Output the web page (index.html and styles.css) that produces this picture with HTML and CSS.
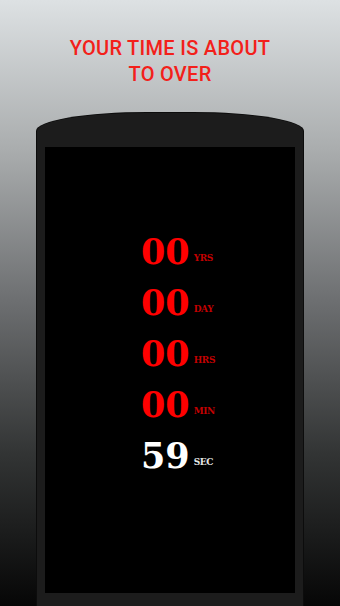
FILE: index.html
```html
<!DOCTYPE html>
<html lang="en">
<head>
    <meta charset="UTF-8">
    <meta name="viewport" content="width=device-width, initial-scale=1.0">
    <title>Countdown</title>
    <link rel="stylesheet" href="styles.css">
</head>
<body>
    <!-- Title -->
    <h1 class="title">YOUR TIME IS ABOUT<br>TO OVER</h1>

    <!-- Phone -->
    <div class="phone">
        <div class="screen">
            <div class="timer">
                <div class="row"><span class="num">00</span><span class="unit">YRS</span></div>
                <div class="row"><span class="num">00</span><span class="unit">DAY</span></div>
                <div class="row"><span class="num">00</span><span class="unit">HRS</span></div>
                <div class="row"><span class="num">00</span><span class="unit">MIN</span></div>
                <div class="row sec"><span class="num">59</span><span class="unit">SEC</span></div>
            </div>
        </div>
    </div>
</body>
</html>
```

FILE: styles.css
```css
html, body {
    margin: 0;
    padding: 0;
    height: 606px;
    overflow: hidden;
}
body {
    background: linear-gradient(#dde1e3, #a9acad 25%, #6c6e70 50%, #323434 75%, #060606);
    font-family: Roboto, Arial, sans-serif;
}
.title {
    margin: 35px 0 0;
    color: #f3201a;
    font-size: 20px;
    font-weight: 500;
    line-height: 26px;
    letter-spacing: 0.3px;
    text-align: center;
}
.phone {
    width: 250px;
    margin: 26px auto 0;
    padding: 34px 8px 20px;
    background: #1c1c1c;
    border-radius: 110px 110px 0 0 / 18px 18px 0 0;
    box-shadow: 0 0 0 1px #0c0c0c;
}
.screen {
    height: 446px;
    background: #000;
}
.timer {
    padding: 79px 0 0 96px;
}
.row {
    height: 51px;
    line-height: 51px;
    white-space: nowrap;
}
.num {
    font-family: "DejaVu Serif", serif;
    font-weight: bold;
    font-size: 35px;
    color: #ff0000;
}
.unit {
    margin-left: 4px;
    font-family: "DejaVu Serif", serif;
    font-weight: bold;
    font-size: 9px;
    letter-spacing: -0.4px;
    color: #c40000;
    vertical-align: 3px;
}
.sec .num {
    color: #fff;
}
.sec .unit {
    color: #e8e8e8;
}
```
